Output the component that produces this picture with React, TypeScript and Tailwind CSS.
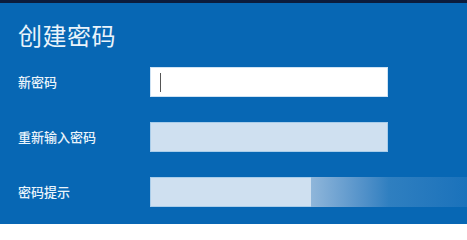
export default function App() {
  const font = { fontFamily: '"Noto Sans CJK SC", "Noto Sans", sans-serif' };
  return (
    <div className="w-[467px] h-[224px] overflow-hidden bg-[#0767b4] text-[#eaf4fb]" style={font}>
      <div className="h-[3px] bg-[#0c1c3c]" />
      <div className="pl-[18px] pr-[79px]">
        <h1 className="mt-[17px] h-[29px] text-[24px] leading-[29px] font-normal tracking-[0.5px]">创建密码</h1>

        <div className="mt-[18px] flex items-center h-[30px]">
          <span className="w-[132px] text-[13px] font-medium">新密码</span>
          <div className="flex-1 h-[30px] bg-white border border-[#cfe3f4] flex items-center pl-[9px]">
            <div className="w-px h-[19px] bg-[#555]" />
          </div>
        </div>

        <div className="mt-[25px] flex items-center h-[30px]">
          <span className="w-[132px] text-[13px] font-medium">重新输入密码</span>
          <div className="flex-1 h-[30px] bg-[#cfe0f0] border border-[#a9cdea]" />
        </div>

        <div className="mt-[25px] flex items-center h-[30px] -mr-[79px]">
          <span className="w-[132px] text-[13px] font-medium">密码提示</span>
          <div className="flex-1 h-[30px] flex">
            <div className="w-[161px] h-full bg-[#cfe0f0] border border-[#a9cdea] border-r-0" />
            <div className="flex-1 h-full bg-gradient-to-r from-[#8fb6da] via-[#2f7fc0] to-[#1a72bb]" />
          </div>
        </div>
      </div>
    </div>
  );
}
